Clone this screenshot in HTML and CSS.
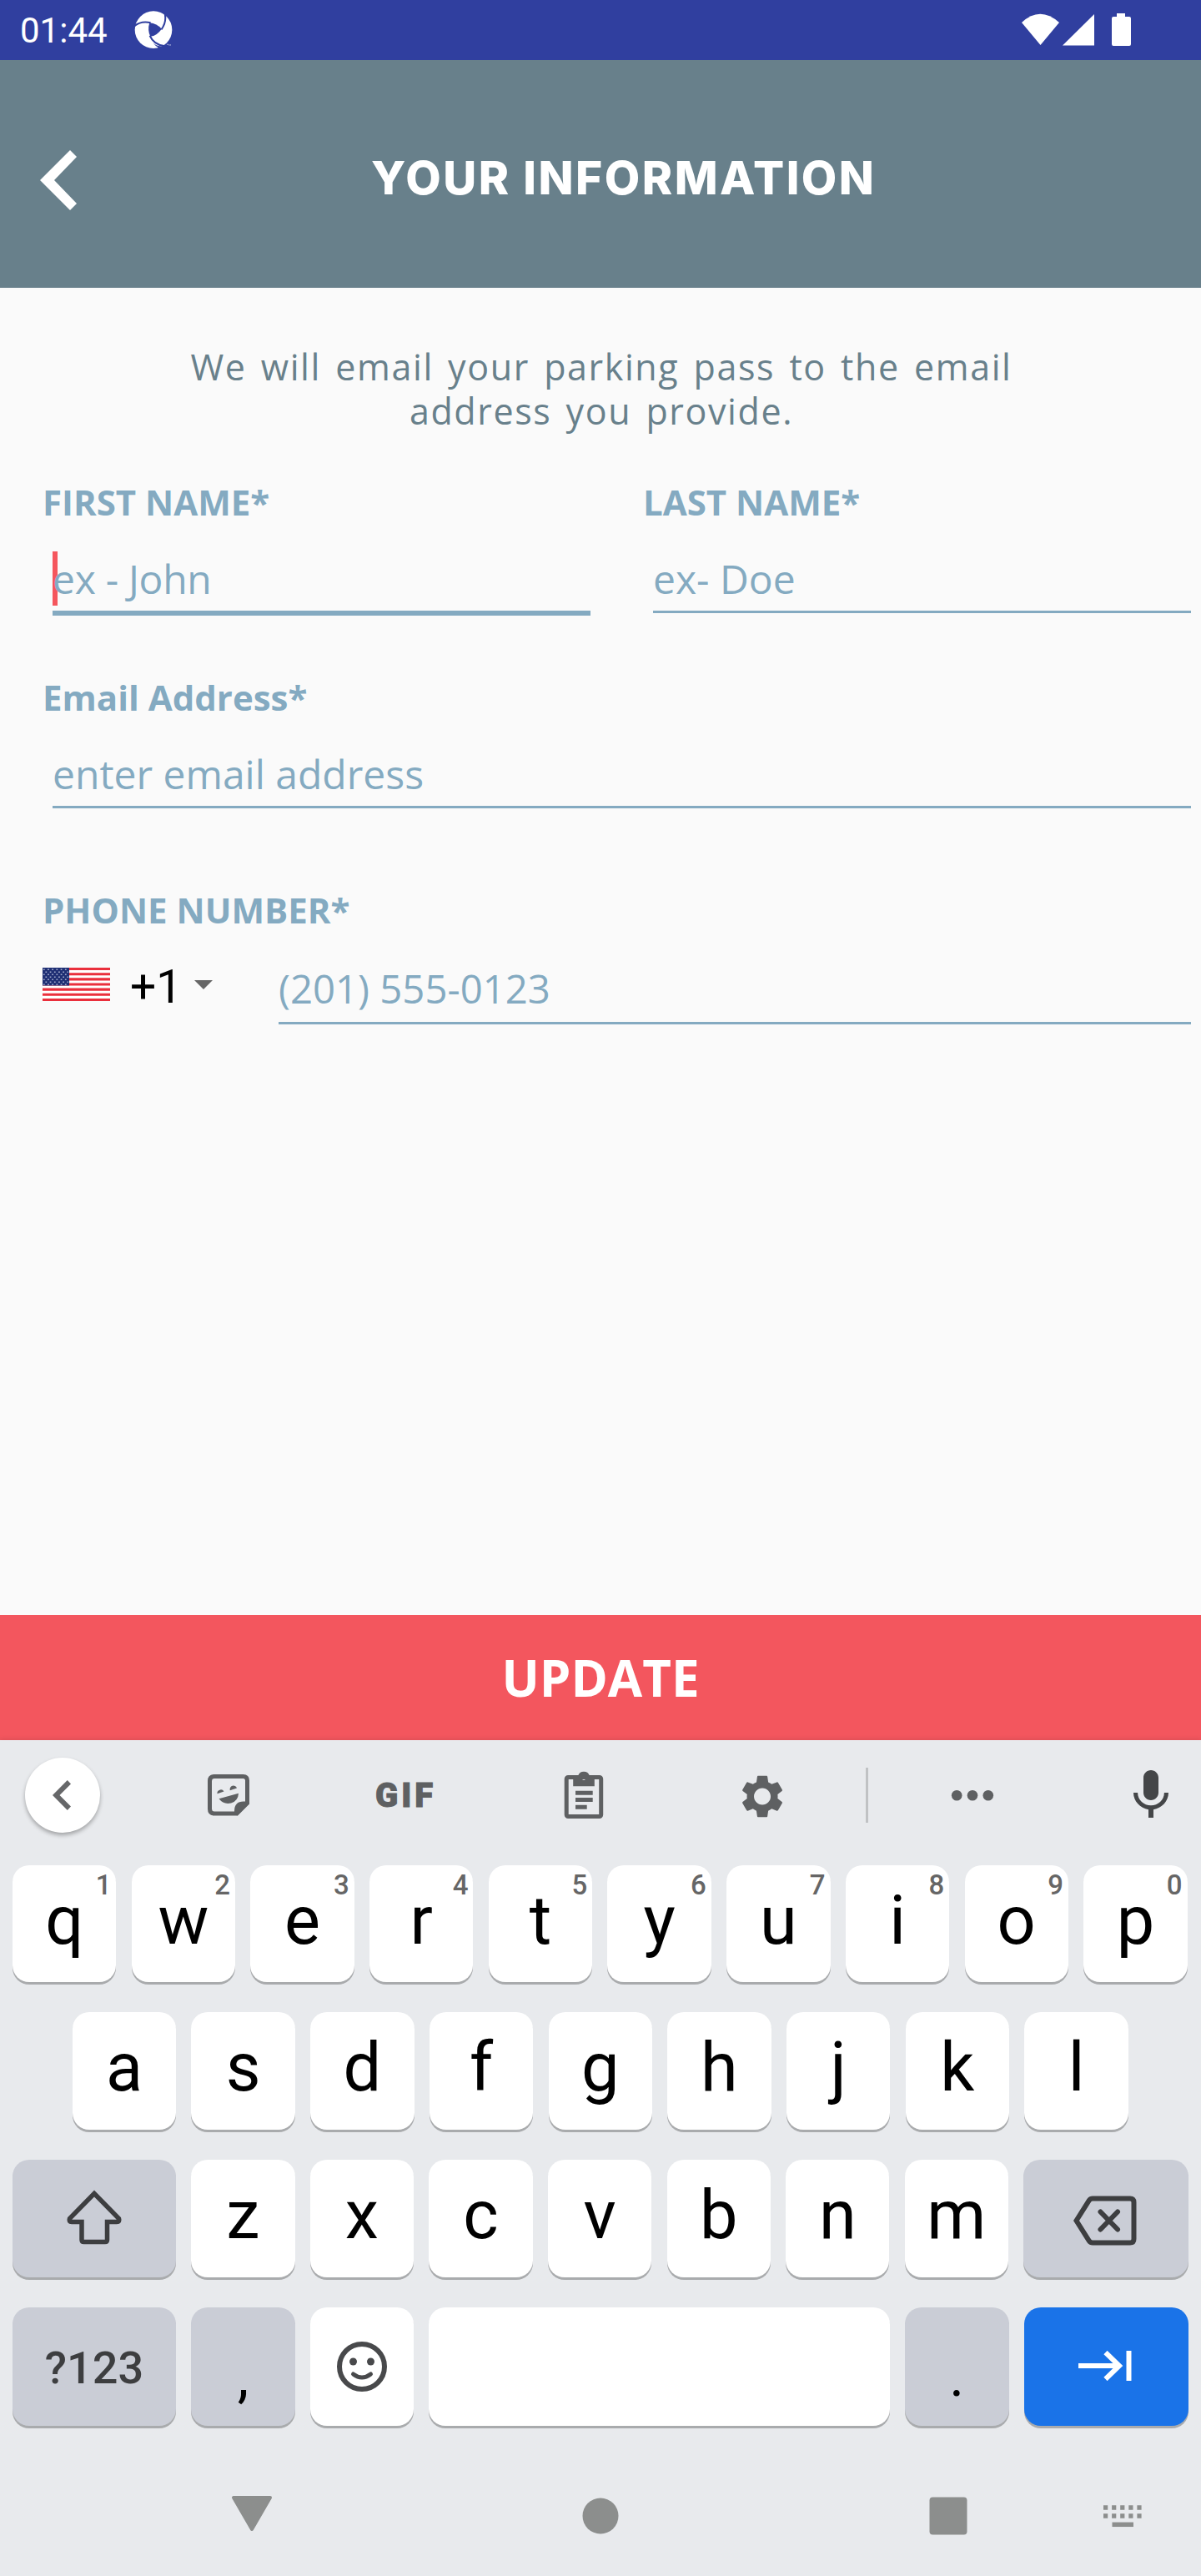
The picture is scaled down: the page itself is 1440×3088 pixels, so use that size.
FILE: index.html
```
<!DOCTYPE html>
<html lang="en">
<head>
<meta charset="utf-8">
<title>Your Information</title>
<link rel="stylesheet" href="styles.css">
</head>
<body>
<div class="status">
  <span class="clock">01:44</span>
  <svg class="app-logo" viewBox="34 24 136 136">
    <circle cx="102" cy="91" r="66" fill="#fff"/>
    <path d="M88 66Q114 68 131 88Q115 112 91 115Q80 92 88 66Z" fill="#303f9f"/>
    <path d="M32 80Q56 58 92 66M141 28Q151 62 130 90M89 112Q104 145 140 148" fill="none" stroke="#303f9f" stroke-width="6"/>
    <path d="M126 170L122 156Q110 150 100 138Q118 154 150 148L160 165Z" fill="#303f9f"/>
    <path d="M150 143h5M158 143v4M162 143v4" stroke="#fff" stroke-width="2"/>
  </svg>
  <span class="grow"></span>
  <svg class="signals" width="132" height="40" viewBox="0 0 132 40" fill="#fff">
    <path d="M0 11Q22 -9.500 45 11L22.500 38Z"/>
    <path d="M87 1V38.500H49Z"/>
    <path d="M114 0h10v4h5q2 0 2 2v31q0 2-2 2h-19q-2 0-2-2V6q0-2 2-2h4z"/>
  </svg>
</div>

<header class="header">
  <svg class="back" width="44" height="72" viewBox="0 0 44 72"><path d="M36 0L44 8L17 36L44 64L36 72L0 36Z" fill="#fff"/></svg>
  <h1 class="title">YOUR INFORMATION</h1>
</header>

<main class="form">
  <p class="intro">We will email your parking pass to the email<br>address you provide.</p>
  <div class="names">
    <div class="field">
      <div class="label">FIRST NAME*</div>
      <div class="input focused"><span class="hint">ex - John</span></div>
    </div>
    <div class="field">
      <div class="label">LAST NAME*</div>
      <div class="input"><span class="hint">ex- Doe</span></div>
    </div>
  </div>
  <div class="field email">
    <div class="label">Email Address*</div>
    <div class="input"><span class="hint">enter email address</span></div>
  </div>
  <div class="field phone">
    <div class="label">PHONE NUMBER*</div>
    <div class="phone-row">
      <svg class="flag" width="81" height="40" viewBox="0 0 81 40">
        <defs>
          <pattern id="stars" width="5.200" height="6" patternUnits="userSpaceOnUse">
            <path d="M1 1.500h1.500v1.600H1zM3.600 4.500h1.500v1.500H3.600z" fill="#b4bcd8"/>
          </pattern>
        </defs>
        <rect width="81" height="40" fill="#fff"/>
        <path d="M0 1.540H81M0 7.690H81M0 13.850H81M0 20H81M0 26.150H81M0 32.310H81M0 38.460H81" stroke="#ea2f3c" stroke-width="3.080"/>
        <rect width="32" height="21.500" fill="#1f2f74"/>
        <rect width="31" height="21" fill="url(#stars)"/>
      </svg>
      <span class="code">+1</span>
      <svg class="caret" width="22" height="11" viewBox="0 0 22 11"><path d="M0 0H22L11 11Z" fill="#666"/></svg>
      <div class="input number"><span class="hint">(201) 555-0123</span></div>
    </div>
  </div>
</main>

<div class="update">UPDATE</div>

<section class="keyboard">
  <div class="toolbar">
    <span class="tool collapse"><svg width="22" height="36" viewBox="0 0 22 36"><path d="M17.800 0L22 4.500L8.500 18L22 31.500L17.800 36L0 18Z" fill="#666769"/></svg></span>
    <svg class="tool sticker" viewBox="0 0 96 96">
      <path d="M31 25.500H65.500Q70.500 25.500 70.500 30.500V57.500L58 70H31Q25.500 70 25.500 64.500V31Q25.500 25.500 31 25.500Z" fill="none" stroke="#5e6062" stroke-width="5"/>
      <path d="M73 58L58.300 72.500L55 70V67Q55 55.500 66 55.500H73Z" fill="#5e6062"/>
      <path d="M34.500 46.300A4.300 4.300 0 0 1 42.500 43.600ZM49.800 42.200A4.300 4.300 0 0 1 58 39.500ZM36.500 52.300L60 45.700Q59.500 55 51 57.500Q42 59.500 36.500 52.300Z" fill="#5e6062"/>
    </svg>
    <span class="tool gif">GIF</span>
    <svg class="tool clip" viewBox="0 0 96 96">
      <rect x="27.200" y="26.500" width="41.500" height="47" rx="2" fill="none" stroke="#5e6062" stroke-width="5"/>
      <path fill-rule="evenodd" d="M35.200 25H41A7.300 7.300 0 0 1 55 25H60.800V37.300H35.200ZM48 24.400a2.800 2.800 0 1 0 .01 0z" fill="#5e6062"/>
      <path d="M38 45.200H58.700M38 53.600H58.700M38 62.200H51.700" stroke="#5e6062" stroke-width="5"/>
    </svg>
    <svg class="tool gear" viewBox="0 0 96 96"><path transform="translate(17.200 18.700) scale(2.570)" fill="#5e6062" d="M19.140 12.940c.04-.3.060-.61.060-.94 0-.32-.02-.64-.07-.94l2.030-1.580c.18-.14.230-.41.120-.61l-1.920-3.320c-.12-.22-.37-.29-.59-.22l-2.390.96c-.5-.38-1.030-.7-1.620-.94l-.36-2.540c-.04-.24-.24-.41-.48-.41h-3.840c-.24 0-.43.17-.47.41l-.36 2.540c-.59.24-1.130.57-1.620.94l-2.390-.96c-.22-.08-.47 0-.59.22L2.740 8.870c-.12.21-.08.470.12.610l2.030 1.580c-.05.3-.09.630-.09.940s.02.640.07.940l-2.030 1.580c-.18.140-.23.410-.12.610l1.920 3.320c.12.220.37.290.59.220l2.390-.96c.5.380 1.030.7 1.620.94l.36 2.540c.05.240.24.410.48.410h3.840c.24 0 .44-.17.470-.41l.36-2.540c.59-.24 1.130-.56 1.620-.94l2.390.96c.22.080.47 0 .59-.22l1.920-3.320c.12-.22.070-.47-.12-.61l-2.010-1.580zM12 15.900c-2.150 0-3.900-1.750-3.900-3.900s1.750-3.900 3.900-3.900 3.900 1.750 3.900 3.900-1.750 3.900-3.900 3.900z"/></svg>
    <span class="divider"></span>
    <svg class="tool more" viewBox="0 0 96 96" fill="#5e6062"><circle cx="29.200" cy="48.300" r="6.300"/><circle cx="48" cy="48.300" r="6.300"/><circle cx="66.800" cy="48.300" r="6.300"/></svg>
    <svg class="tool mic" viewBox="0 0 96 96"><path transform="translate(12 12) scale(3)" fill="#444648" d="M12 14c1.660 0 3-1.340 3-3V5c0-1.660-1.340-3-3-3S9 3.340 9 5v6c0 1.660 1.340 3 3 3zm5.300-3c0 3-2.540 5.100-5.300 5.100S6.700 14 6.700 11H5c0 3.410 2.720 6.230 6 6.720V21h2v-3.280c3.280-.48 6-3.300 6-6.720h-1.700z"/></svg>
  </div>

  <div class="row row1">
    <span class="key">q<i>1</i></span><span class="key">w<i>2</i></span><span class="key">e<i>3</i></span><span class="key">r<i>4</i></span><span class="key">t<i>5</i></span><span class="key">y<i>6</i></span><span class="key">u<i>7</i></span><span class="key">i<i>8</i></span><span class="key">o<i>9</i></span><span class="key">p<i>0</i></span>
  </div>
  <div class="row row2">
    <span class="key">a</span><span class="key">s</span><span class="key">d</span><span class="key">f</span><span class="key">g</span><span class="key">h</span><span class="key">j</span><span class="key">k</span><span class="key">l</span>
  </div>
  <div class="row row3">
    <span class="key wide gray">
      <svg width="68" height="66" viewBox="0 0 68 66"><path d="M34 4.500L63.500 34.500Q65 38.500 61 38.500H49.500V60Q49.500 62.500 47 62.500H21.500Q19 62.500 19 60V38.500H7Q3 38.500 4.500 34.500Z" fill="none" stroke="#3d3e40" stroke-width="5.500"/></svg>
    </span>
    <span class="key">z</span><span class="key">x</span><span class="key">c</span><span class="key">v</span><span class="key">b</span><span class="key">n</span><span class="key">m</span>
    <span class="key wide gray">
      <svg class="delete" width="76" height="60" viewBox="0 0 76 60" fill="none" stroke="#3d3e40"><path d="M23 3.500H68Q72.500 3.500 72.500 8V52Q72.500 56.500 68 56.500H23Q20.500 56.500 19 54.500L3.500 30L19 5.500Q20.500 3.500 23 3.500Z" stroke-width="6"/><path d="M32.500 19.500L53 40.500M53 19.500L32.500 40.500" stroke-width="6" stroke-linecap="round"/></svg>
    </span>
  </div>
  <div class="row row4">
    <span class="key wide gray symbols">?123</span>
    <span class="key gray punct">,</span>
    <span class="key emoji"><svg width="62" height="62" viewBox="0 0 62 62"><circle cx="31" cy="31" r="27" fill="none" stroke="#48494b" stroke-width="6"/><circle cx="20.500" cy="25" r="4.500" fill="#48494b"/><circle cx="41.500" cy="25" r="4.500" fill="#48494b"/><path d="M20.500 40Q31 48 41.500 40" fill="none" stroke="#48494b" stroke-width="5" stroke-linecap="round"/></svg></span>
    <span class="key space"></span>
    <span class="key gray punct">.</span>
    <span class="key wide enter"><svg width="64" height="36" viewBox="0 0 64 36"><path d="M0 18H49M32.500 2L49 18L32.500 34" fill="none" stroke="#fff" stroke-width="6"/><path d="M60.500 0V36" stroke="#fff" stroke-width="6"/></svg></span>
  </div>

  <nav class="nav">
    <svg width="60" height="60" viewBox="0 0 60 60"><path d="M8 8H52L30 46Z" fill="#8c8e8d" stroke="#8c8e8d" stroke-width="4" stroke-linejoin="round"/></svg>
    <svg width="60" height="60" viewBox="0 0 60 60"><circle cx="30" cy="30" r="21.500" fill="#8c8e8d"/></svg>
    <svg width="60" height="60" viewBox="0 0 60 60"><rect x="7.500" y="7.500" width="45" height="45" rx="4" fill="#8c8e8d"/></svg>
    <svg width="60" height="60" viewBox="0 0 60 60"><path d="M7 20H53M7 30H53" stroke="#8c8e8d" stroke-width="5.500" stroke-dasharray="5.200 4.900"/><path d="M17.500 40.300H43" stroke="#8c8e8d" stroke-width="5.500"/></svg>
  </nav>
</section>
</body>
</html>
```
FILE: styles.css
```
* { box-sizing: border-box; }
body {
  margin: 0;
  width: 1440px;
  height: 3088px;
  display: flex;
  flex-direction: column;
  overflow: hidden;
  background: #fafafa;
  font-family: "Open Sans", sans-serif;
}
svg { display: block; flex: none; }
.grow { flex: 1; }

.status {
  flex: none;
  height: 72px;
  padding: 0 83px 0 24px;
  display: flex;
  align-items: center;
  background: #303f9f;
}
.clock { font: 400 42px/72px Roboto, sans-serif; color: #fff; padding-top: 2px; }
.app-logo { width: 46px; height: 46px; margin-left: 32px; }

.header {
  flex: none;
  height: 273px;
  padding: 108px 0 0 48px;
  display: flex;
  align-items: flex-start;
  background: #68808b;
}
.title {
  margin: 3px 0 0 353px;
  font: 800 55px/60px Inter, sans-serif;
  letter-spacing: 2.5px;
  color: #fff;
  white-space: nowrap;
}

.form { flex: none; height: 1591px; padding: 68px 12px 0 51px; }
.intro {
  margin: 0 0 54px;
  padding-right: 37px;
  font-size: 43px;
  line-height: 53px;
  letter-spacing: 1.6px;
  word-spacing: 4.5px;
  text-align: center;
  color: #68808b;
}
.names { display: grid; grid-template-columns: 657px 645px; column-gap: 63px; height: 234px; }
.names .field + .field { width: 657px; }
.label { font-weight: 700; font-size: 42px; line-height: 57px; color: #84aac1; }
.input {
  margin: 31px 0 0 12px;
  padding-bottom: 6px;
  border-bottom: 3px solid #84aac1;
  font-size: 48px;
  line-height: 65px;
  color: #84aac1;
}
.focused { border-bottom-width: 6px; }
.focused .hint {
  display: block;
  letter-spacing: -0.3px;
  background: linear-gradient(#f5565d, #f5565d) 0 0 / 6px 65px no-repeat;
}
.email { margin-bottom: 93px; }
.phone-row { display: flex; align-items: flex-start; margin-top: 33px; }
.flag { margin-top: 8px; }
.code { margin: -1px 0 0 24px; width: 77px; font: 400 55px/64px Roboto, sans-serif; color: #000; }
.caret { margin-top: 23px; }
.number { flex: 1; margin: 0 0 0 79px; padding-bottom: 8px; font-size: 47.300px; }

.update {
  flex: none;
  height: 150px;
  font-weight: 700;
  font-size: 60px;
  line-height: 150px;
  text-align: center;
  color: #fff;
  background: #f3565e;
}

.keyboard {
  flex: 1;
  display: flex;
  flex-direction: column;
  background: #e8eaed;
  box-shadow: 0 -2px 5px rgba(0, 0, 0, 0.08);
}
.toolbar { height: 150px; padding: 18px 0 0 27px; display: flex; align-items: flex-start; }
.tool { width: 96px; height: 96px; flex: none; }
.collapse {
  width: 90px;
  height: 90px;
  margin: 3px 3px 0;
  padding-right: 3px;
  display: flex;
  align-items: center;
  justify-content: center;
  border-radius: 50%;
  background: #fff;
  box-shadow: 0 3px 5px rgba(0, 0, 0, 0.3);
}
.sticker { margin-left: 103px; }
.gif {
  margin-left: 115px;
  font: 900 40px/97px Roboto, sans-serif;
  letter-spacing: 4px;
  padding-left: 13px;
  color: #5e6062;
  -webkit-text-stroke: 1px #5e6062;
}
.clip { margin-left: 119px; }
.gear { margin-left: 118px; }
.divider { width: 3px; height: 66px; margin: 15px 0 0 76px; background: #c0c2c4; }
.more { margin-left: 77px; }
.mic { margin-left: 118px; }

.row { display: flex; gap: 18.200px; padding: 0 15px; margin-bottom: 36px; height: 141px; }
.row1 { height: 140px; gap: 18.300px; }
.row2 { padding: 0 86.800px; gap: 18.300px; }
.row4 { height: 142px; margin-bottom: 0; }
.key {
  position: relative;
  flex: none;
  width: 124.400px;
  border-radius: 20px;
  background: #fff;
  box-shadow: 0 3px 0 #a9abad;
  font: 400 81px/133px Roboto, sans-serif;
  text-align: center;
  color: #000;
}
.key i {
  position: absolute;
  top: 0;
  right: 6px;
  font: 500 33px/47px Roboto, sans-serif;
  color: #666;
}
.wide { width: 196px; }
.wide:last-child { width: 197.300px; }
.gray { background: #cacdd6; }
.enter { background: #1a73e8; }
.wide, .emoji { display: flex; align-items: center; justify-content: center; }
.wide svg { margin-top: -3px; }
.wide .delete { margin-top: 4px; }
.wide:last-child svg { margin-right: 2px; }
.symbols { padding-top: 4px; font-weight: 500; font-size: 54px; line-height: 64px; color: #3d3e40; }
.punct { font-size: 68px; line-height: 166px; }
.space { flex: 1; }

.nav { display: flex; padding: 78px 0 0 272px; }
.nav svg + svg { margin-left: 358px; }
.nav svg:nth-child(3) { margin-left: 356.500px; }
.nav svg:nth-child(4) { margin-left: 149.500px; }
```
